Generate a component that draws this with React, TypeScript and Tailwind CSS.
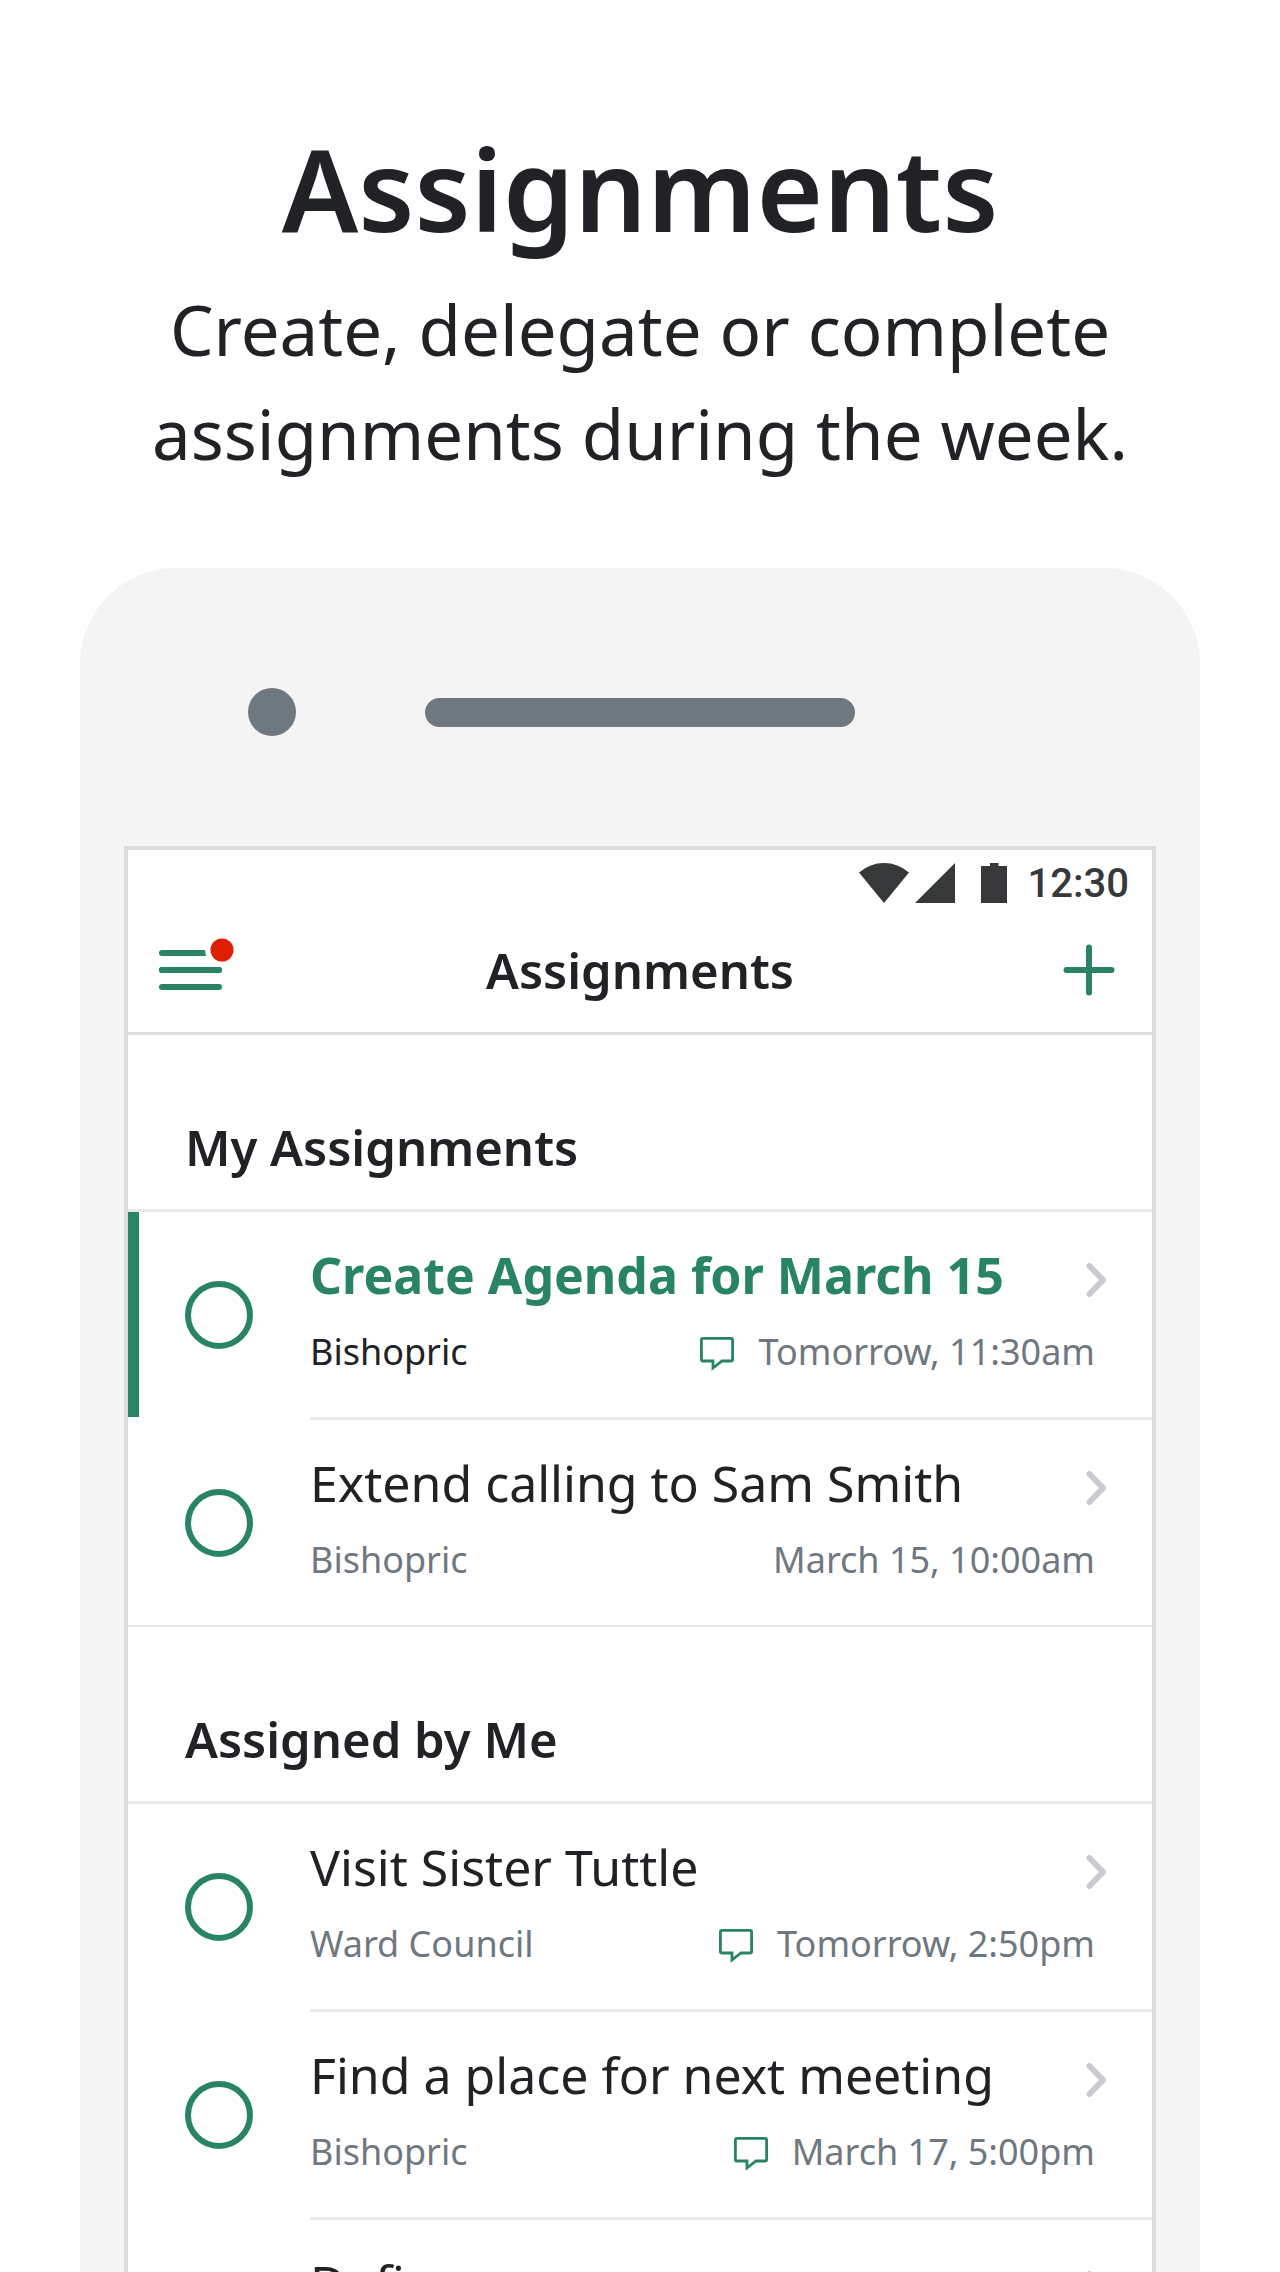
type Assignment = {
  id: string;
  title: string;
  group: string;
  due: string;
  comment?: boolean;
  highlighted?: boolean;
};

const sections: { heading: string; items: Assignment[] }[] = [
  {
    heading: "My Assignments",
    items: [
      { id: "agenda", title: "Create Agenda for March 15", group: "Bishopric", due: "Tomorrow, 11:30am", comment: true, highlighted: true },
      { id: "calling", title: "Extend calling to Sam Smith", group: "Bishopric", due: "March 15, 10:00am" },
    ],
  },
  {
    heading: "Assigned by Me",
    items: [
      { id: "visit", title: "Visit Sister Tuttle", group: "Ward Council", due: "Tomorrow, 2:50pm", comment: true },
      { id: "place", title: "Find a place for next meeting", group: "Bishopric", due: "March 17, 5:00pm", comment: true },
      { id: "define", title: "Define", group: "", due: "" },
    ],
  },
];

function MenuIcon() {
  return (
    <svg className="h-16 w-[76px]" viewBox="0 0 76 64" fill="none" aria-hidden="true">
      <path d="M4 15H61M4 32H61M4 49H61" stroke="#298463" strokeWidth="6" strokeLinecap="round" />
      <circle cx="64" cy="12" r="17" fill="#fff" />
      <path d="M4 32H61" stroke="#298463" strokeWidth="6" strokeLinecap="round" />
      <circle cx="64" cy="12" r="11.5" fill="#de1e00" />
    </svg>
  );
}

function PlusIcon() {
  return (
    <svg className="size-[52px]" viewBox="0 0 52 52" fill="none" aria-hidden="true">
      <path d="M26 3.5V48.5M3.5 26H48.5" stroke="#298463" strokeWidth="6" strokeLinecap="round" />
    </svg>
  );
}

function ChevronIcon() {
  return (
    <svg className="mb-2 h-[34px] w-5 shrink-0" viewBox="0 0 20 34" fill="none" aria-hidden="true">
      <path d="M3.5 3L17 17L3.5 31" stroke="#c8ccd2" strokeWidth="6" strokeLinecap="round" strokeLinejoin="round" />
    </svg>
  );
}

function CommentIcon() {
  return (
    <svg className="mb-1 size-[34px]" viewBox="0 0 34 34" fill="none" aria-label="Has comments">
      <path
        d="M3 1.4H31Q32.6 1.4 32.6 3V22.5Q32.6 24 31 24H22L13 31V24H3Q1.4 24 1.4 22.5V3Q1.4 1.4 3 1.4Z"
        stroke="#298463"
        strokeWidth="2.8"
      />
    </svg>
  );
}

function StatusBar() {
  return (
    <div className="flex h-[58px] items-start justify-end pt-[13px] pr-[23px] text-[#373839]">
      <svg className="h-10 w-[50px]" viewBox="0 0 50 40" fill="currentColor" aria-hidden="true">
        <path d="M0 9.5Q11 0 25 0T50 9.5L25 40Z" />
      </svg>
      <svg className="ml-[6px] size-10" viewBox="0 0 40 40" fill="currentColor" aria-hidden="true">
        <path d="M40 0V40H0Z" />
      </svg>
      <svg className="ml-[26px] h-10 w-[26px]" viewBox="0 0 26 40" fill="currentColor" aria-hidden="true">
        <path d="M9 0H17.5V3H26V40H0V3H9Z" />
      </svg>
      <span className="ml-[21px] font-['Roboto',sans-serif] text-[40px] leading-[42px] font-medium">12:30</span>
    </div>
  );
}

function Row({ item }: { item: Assignment }) {
  const bar = item.highlighted ? "border-[#298463]" : "border-transparent";
  const title = item.highlighted ? "font-bold text-[#298463]" : "text-[#212225]";
  const group = item.highlighted ? "text-[#212225]" : "text-[#6f777f]";
  return (
    <div className={`flex min-h-[205px] items-center gap-[57px] border-l-[11px] pl-[46px] ${bar}`}>
      <input
        type="checkbox"
        aria-labelledby={item.id}
        className="size-[68px] shrink-0 appearance-none rounded-full border-[6px] border-[#298463] checked:bg-[#298463]"
      />
      <div className="min-w-0 flex-1 pt-[33px] pb-[42px]">
        <a href="#" className="flex items-end justify-between pr-[46px]">
          <span id={item.id} className={`text-[50px] leading-[60px] whitespace-nowrap ${title}`}>
            {item.title}
          </span>
          <ChevronIcon />
        </a>
        <div className="mt-[22px] flex h-12 justify-between pr-[57px] text-[36px] leading-[50px] whitespace-nowrap text-[#6f777f]">
          <span className={group}>{item.group}</span>
          <span className="flex h-12 items-end gap-6">
            {item.comment && <CommentIcon />}
            <span className="self-start">{item.due}</span>
          </span>
        </div>
      </div>
    </div>
  );
}

export default function App() {
  return (
    <div className="flex h-screen flex-col overflow-hidden bg-white font-['Noto_Sans',sans-serif] text-[#212225]">
      <header className="shrink-0 pt-32 text-center">
        <h1 className="text-[114px] leading-[120px] font-semibold">Assignments</h1>
        <p className="mt-[29px] text-[69px] leading-[104px]">
          Create, delegate or complete
          <br />
          assignments during the week.
        </p>
      </header>

      <div className="mx-20 mt-[83px] min-h-0 flex-1 overflow-hidden rounded-t-[96px] bg-[#f4f4f4] px-11 pt-[120px]">
        <div className="grid grid-cols-[1fr_430px_1fr] items-center">
          <span className="ml-[124px] size-12 rounded-full bg-[#6f777f]" />
          <span className="h-[29px] rounded-full bg-[#6f777f]" />
        </div>

        <main className="mt-[110px] border-4 border-[#dcdde1] bg-white">
          <StatusBar />
          <nav className="grid h-[127px] grid-cols-[1fr_auto_1fr] items-center border-b-[3px] border-[#dcdde1] px-[30px]">
            <button type="button" aria-label="Menu" className="justify-self-start">
              <MenuIcon />
            </button>
            <h2 className="text-[49px] leading-[60px] font-semibold">Assignments</h2>
            <button type="button" aria-label="Add assignment" className="mr-[7px] justify-self-end">
              <PlusIcon />
            </button>
          </nav>

          {sections.map((section) => (
            <section key={section.heading} className="border-b-2 border-[#e7e8ea]">
              <h3 className="border-b-[3px] border-[#e7e8ea] pt-[82px] pb-8 pl-[57px] text-[49px] leading-[60px] font-semibold">
                {section.heading}
              </h3>
              <ul>
                {section.items.map((item, i) => (
                  <li key={item.id}>
                    {i > 0 && <div className="ml-[182px] h-[3px] bg-[#e7e8ea]" />}
                    <Row item={item} />
                  </li>
                ))}
              </ul>
            </section>
          ))}
        </main>
      </div>
    </div>
  );
}
